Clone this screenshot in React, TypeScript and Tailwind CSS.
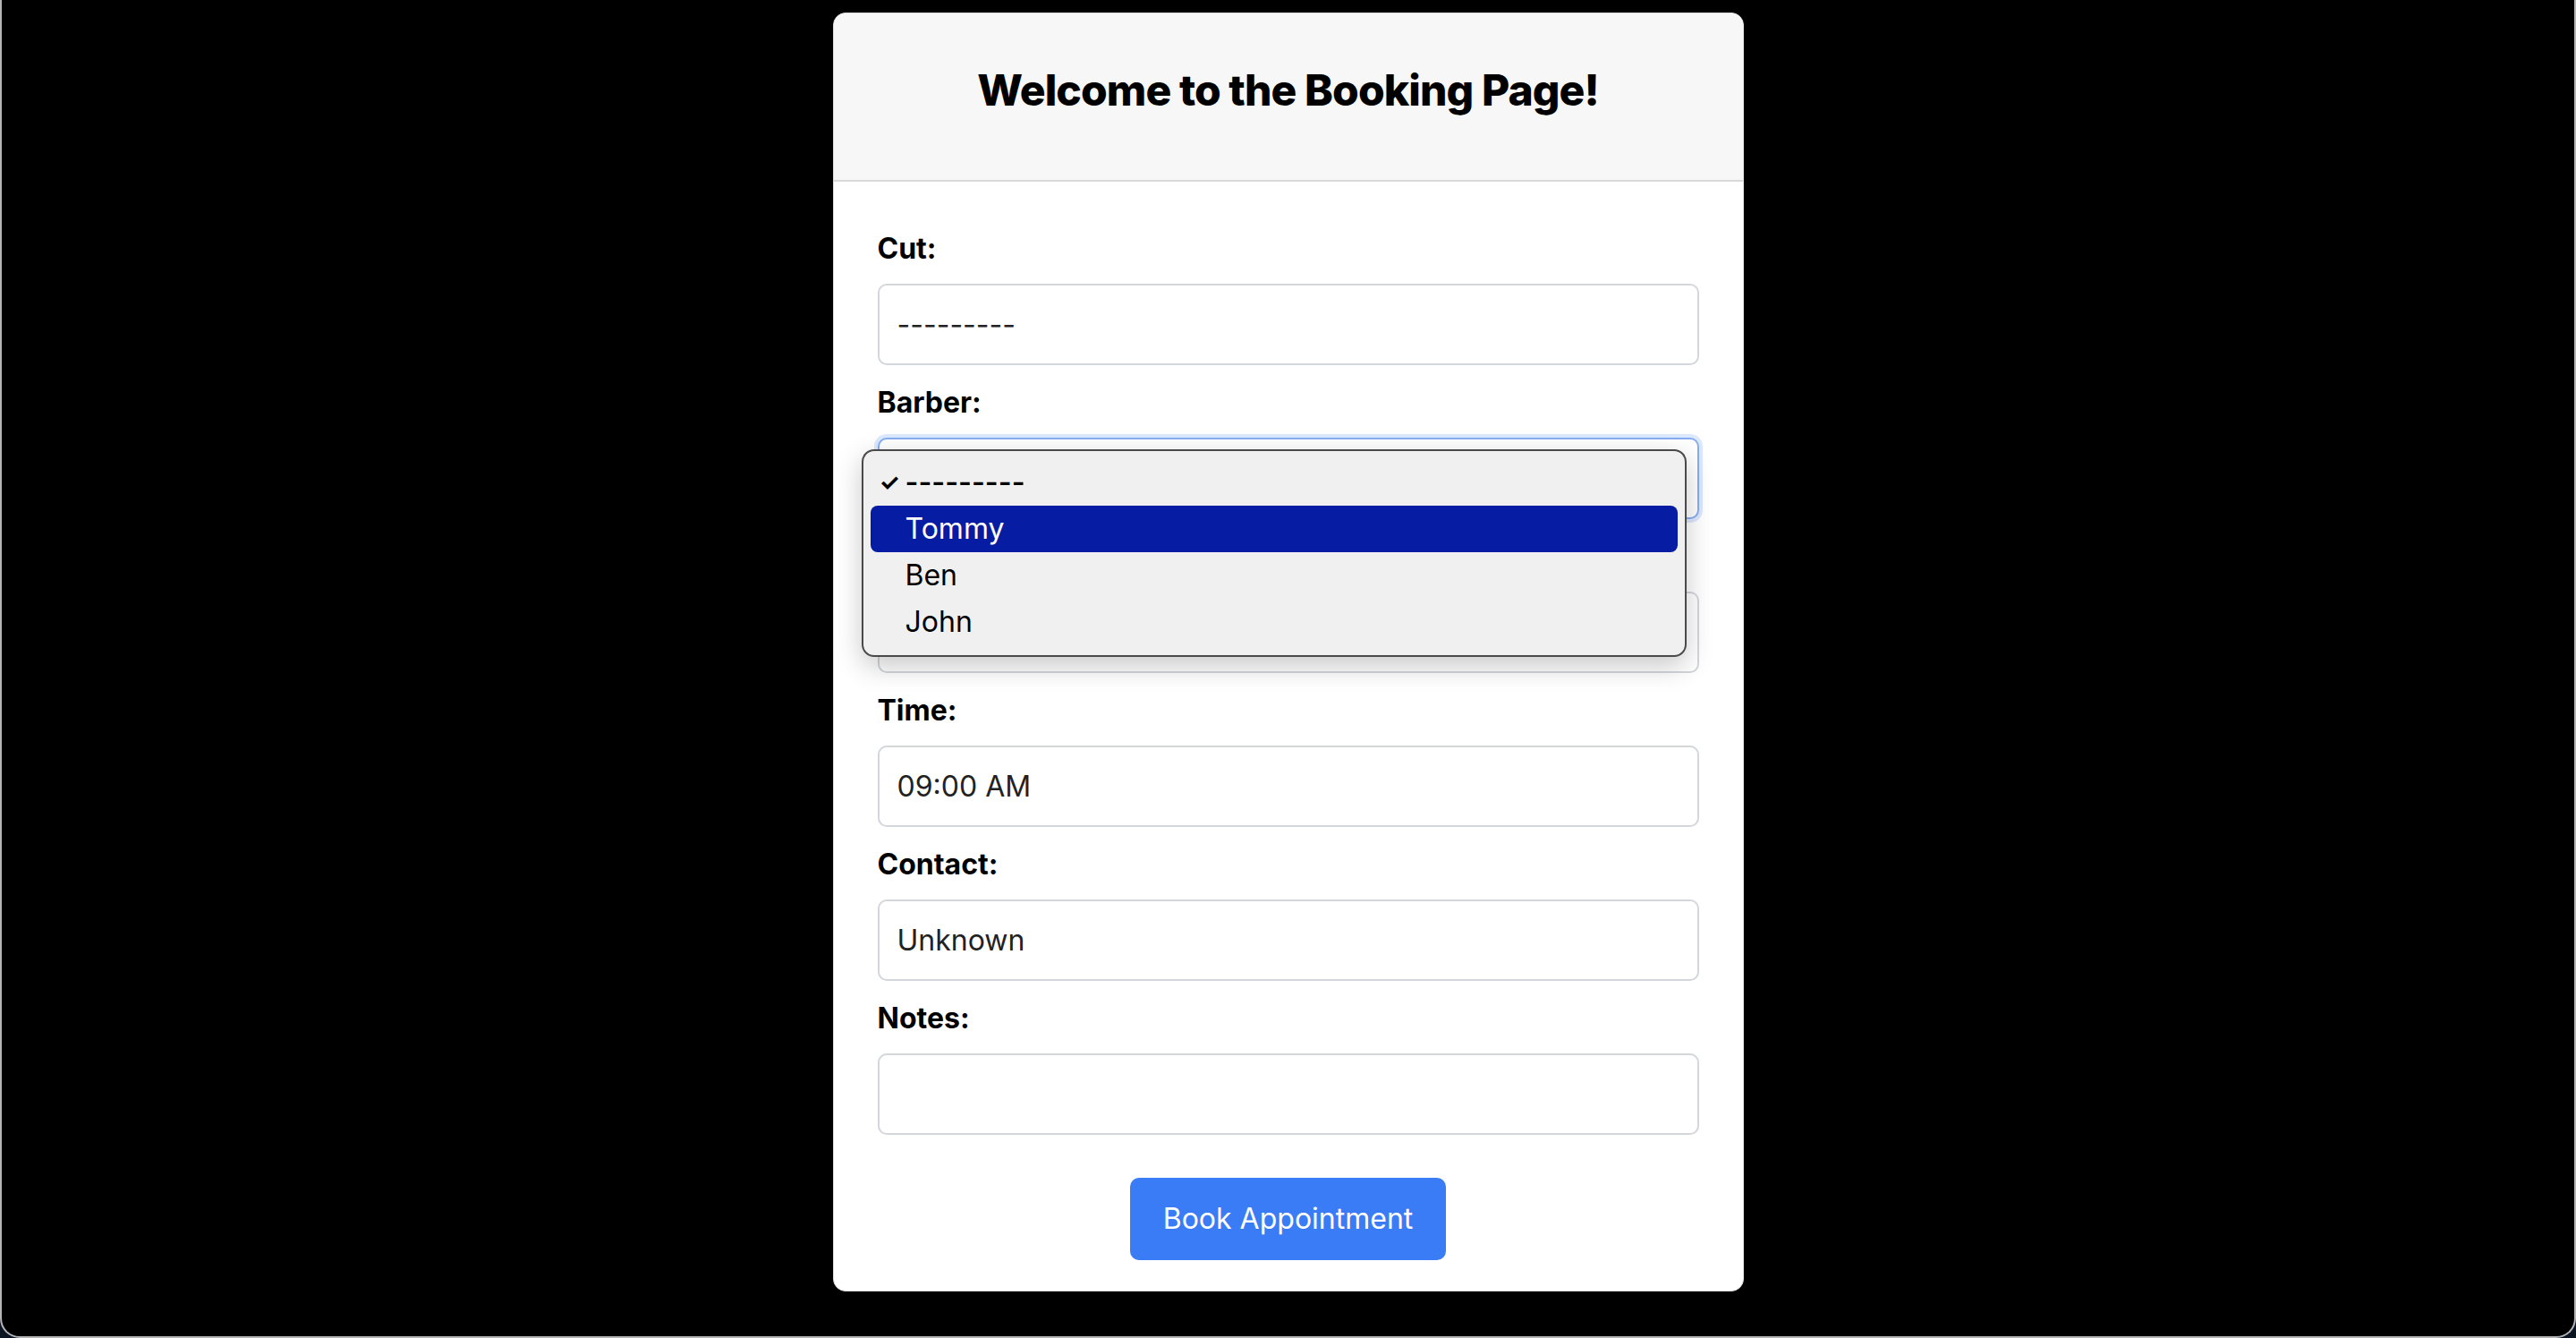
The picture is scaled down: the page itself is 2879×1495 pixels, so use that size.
import React from "react";

const fields = [
  { label: "Cut:", value: "---------" },
  { label: "Barber:", value: "---------", focused: true },
  { label: "Date:", value: "" },
  { label: "Time:", value: "09:00 AM" },
  { label: "Contact:", value: "Unknown" },
  { label: "Notes:", value: "" },
];

const barbers = ["---------", "Tommy", "Ben", "John"];

const BarberMenu = () => {
  return (
    <div className="absolute left-[-18px] top-[13px] z-10 w-[922px] rounded-[14px] border-2 border-[#4a4a4a] bg-[#f0f0f0] px-[8px] pt-[9px] pb-[11px] shadow-[0_10px_30px_rgba(0,0,0,0.22)]">
      {barbers.map((name, index) => (
        <div
          key={name}
          className={
            index === 1
              ? "relative h-[52px] rounded-[8px] bg-[#061ca3] pl-[39px] text-[32px] leading-[52px] text-white"
              : "relative h-[52px] rounded-[8px] pl-[39px] text-[32px] leading-[52px] text-black"
          }
        >
          {index === 0 && (
            <span className="absolute left-[10px] top-0 text-[26px] font-bold">✓</span>
          )}
          <span className={index === 0 ? "font-semibold" : ""}>{name}</span>
        </div>
      ))}
    </div>
  );
};

const App = () => {
  return (
    <div className="h-[1495px] w-full bg-[#0c1622] font-['Inter','Noto_Sans',sans-serif]">
      <div className="flex h-[1495px] items-start justify-center rounded-b-[22px] border-x-2 border-b-2 border-[#b5b5b5] bg-black pt-[14px]">
        <div className="w-[1018px] rounded-[14px] border border-[#dcdcdc] bg-white">
          <div className="rounded-t-[14px] border-b-2 border-[#d9d9d9] bg-[#f7f7f7] pt-[57px] pb-[71px] text-center">
            <h1 className="text-[48px] leading-[58px] font-extrabold tracking-[-0.9px] text-black">
              Welcome to the Booking Page!
            </h1>
          </div>

          {/* form */}
          <form className="px-[49px] pt-[55px] pb-[34px]">
            {fields.map((field) => (
              <div key={field.label} className="mb-[22px]">
                <label className="mb-[19px] block text-[32px] leading-[40px] font-bold text-black">
                  {field.label}
                </label>
                <div className="relative">
                  <div
                    className={
                      field.focused
                        ? "flex h-[91px] items-center rounded-[10px] border-2 border-[#86adf3] bg-white px-[20px] text-[32px] text-[#222] shadow-[0_0_0_4px_rgba(59,130,246,0.18)]"
                        : "flex h-[91px] items-center rounded-[10px] border-2 border-[#d3d6da] bg-white px-[20px] text-[32px] text-[#222]"
                    }
                  >
                    {field.value}
                  </div>
                  {field.focused && <BarberMenu />}
                </div>
              </div>
            ))}

            <button
              type="button"
              className="mx-auto mt-[48px] block h-[92px] w-[353px] rounded-[10px] bg-[#3a7cf6] text-[32px] text-white"
            >
              Book Appointment
            </button>
          </form>
        </div>
      </div>
    </div>
  );
};

export default App;
